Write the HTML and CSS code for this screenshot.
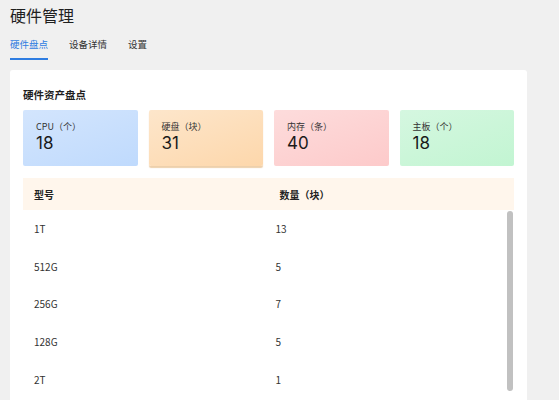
FILE: index.html
```html
<!DOCTYPE html>
<html>
<head>
  <meta charset="UTF-8" />
  <title>硬件管理</title>
  <link rel="stylesheet" href="styles.css">
</head>
<body>
  <div id="header">
    <h1 class="title">硬件管理</h1>
    <div class="tabs">
      <div class="tab active">硬件盘点</div>
      <div class="tab">设备详情</div>
      <div class="tab">设置</div>
    </div>
  </div>
  <div id="content">
    <div class="panel">
      <div class="panel-title">硬件资产盘点</div>
      <div class="stats">
        <div class="stat blue">
          <div class="stat-label">CPU（个）</div>
          <div class="stat-value">18</div>
        </div>
        <div class="stat orange">
          <div class="stat-label">硬盘（块）</div>
          <div class="stat-value">31</div>
        </div>
        <div class="stat red">
          <div class="stat-label">内存（条）</div>
          <div class="stat-value">40</div>
        </div>
        <div class="stat green">
          <div class="stat-label">主板（个）</div>
          <div class="stat-value">18</div>
        </div>
      </div>
      <div class="table">
        <div class="table-head">
          <div class="cell">型号</div>
          <div class="cell">数量（块）</div>
        </div>
        <div class="table-body">
          <div class="rows">
            <div class="row"><div class="cell">1T</div><div class="cell">13</div></div>
            <div class="row"><div class="cell">512G</div><div class="cell">5</div></div>
            <div class="row"><div class="cell">256G</div><div class="cell">7</div></div>
            <div class="row"><div class="cell">128G</div><div class="cell">5</div></div>
            <div class="row"><div class="cell">2T</div><div class="cell">1</div></div>
          </div>
          <div class="scrollbar"><div class="thumb"></div></div>
        </div>
      </div>
    </div>
  </div>
</body>
</html>
```

FILE: styles.css
```css
html {
	margin:0px;
	padding:0px;
	height:100%;
	overflow:hidden;
}

body {
	margin:0px;
	padding:0px;
	height:100%;
	background:#f0f0f0;
	font-family:"Noto Sans CJK SC","Inter","Liberation Sans",sans-serif;
	color:#222222;
	overflow:hidden;
}

#header {
	padding:0px 10px;
}

#header .title {
	margin:0px;
	padding-top:4px;
	font-size:16px;
	font-weight:normal;
	line-height:23px;
	color:#1f1f1f;
}

#header .tabs {
	display:flex;
	gap:21px;
	margin-top:10px;
}

#header .tab {
	font-size:9.5px;
	line-height:14px;
	padding-bottom:7px;
	color:#333333;
	border-bottom:2px solid transparent;
}

#header .tab.active {
	color:#2f7de1;
	border-bottom-color:#2f7de1;
}

#content {
	padding:10px 32px 0px 10px;
}

.panel {
	background:#ffffff;
	border-radius:3px;
	padding:17px 13px 0px 13px;
	height:330px;
}

.panel-title {
	font-size:10.5px;
	font-weight:bold;
	line-height:16px;
	margin-bottom:7px;
	color:#1f1f1f;
}

.stats {
	display:grid;
	grid-template-columns:repeat(4, 1fr);
	gap:11px;
}

.stat {
	height:56px;
	border-radius:2px;
	padding:10px 13px 0px 13px;
	box-sizing:border-box;
}

.stat-label {
	font-size:9px;
	line-height:13px;
	color:#333333;
}

.stat-value {
	font-family:"Inter","Liberation Sans",sans-serif;
	font-size:17px;
	line-height:20px;
	color:#1a1a1a;
}

.stat.blue {
	background:linear-gradient(160deg, #d3e5fd, #bfdafd);
}

.stat.orange {
	background:linear-gradient(160deg, #fde6cb, #fdd7ab);
	box-shadow:0px 2px 1px rgba(214, 150, 70, 0.45);
}

.stat.red {
	background:linear-gradient(160deg, #fddcdc, #fdcaca);
}

.stat.green {
	background:linear-gradient(160deg, #d5f7e0, #c2f5d2);
}

.table {
	margin-top:12px;
	font-size:10px;
}

.table-head {
	display:grid;
	grid-template-columns:1fr 1fr;
	height:32px;
	align-items:center;
	background:#fff6ec;
	font-weight:bold;
	color:#222222;
}

.table .cell {
	padding-left:11px;
}

.table-body {
	display:flex;
	height:188px;
}

.rows {
	flex:1;
}

.scrollbar {
	width:8px;
	padding:1px 1px 0px 1px;
	box-sizing:border-box;
}

.scrollbar .thumb {
	height:180px;
	background:#c1c1c1;
	border-radius:3px;
}

.row {
	display:grid;
	grid-template-columns:1fr 1fr;
	height:37.6px;
	align-items:center;
	color:#333333;
}
```
